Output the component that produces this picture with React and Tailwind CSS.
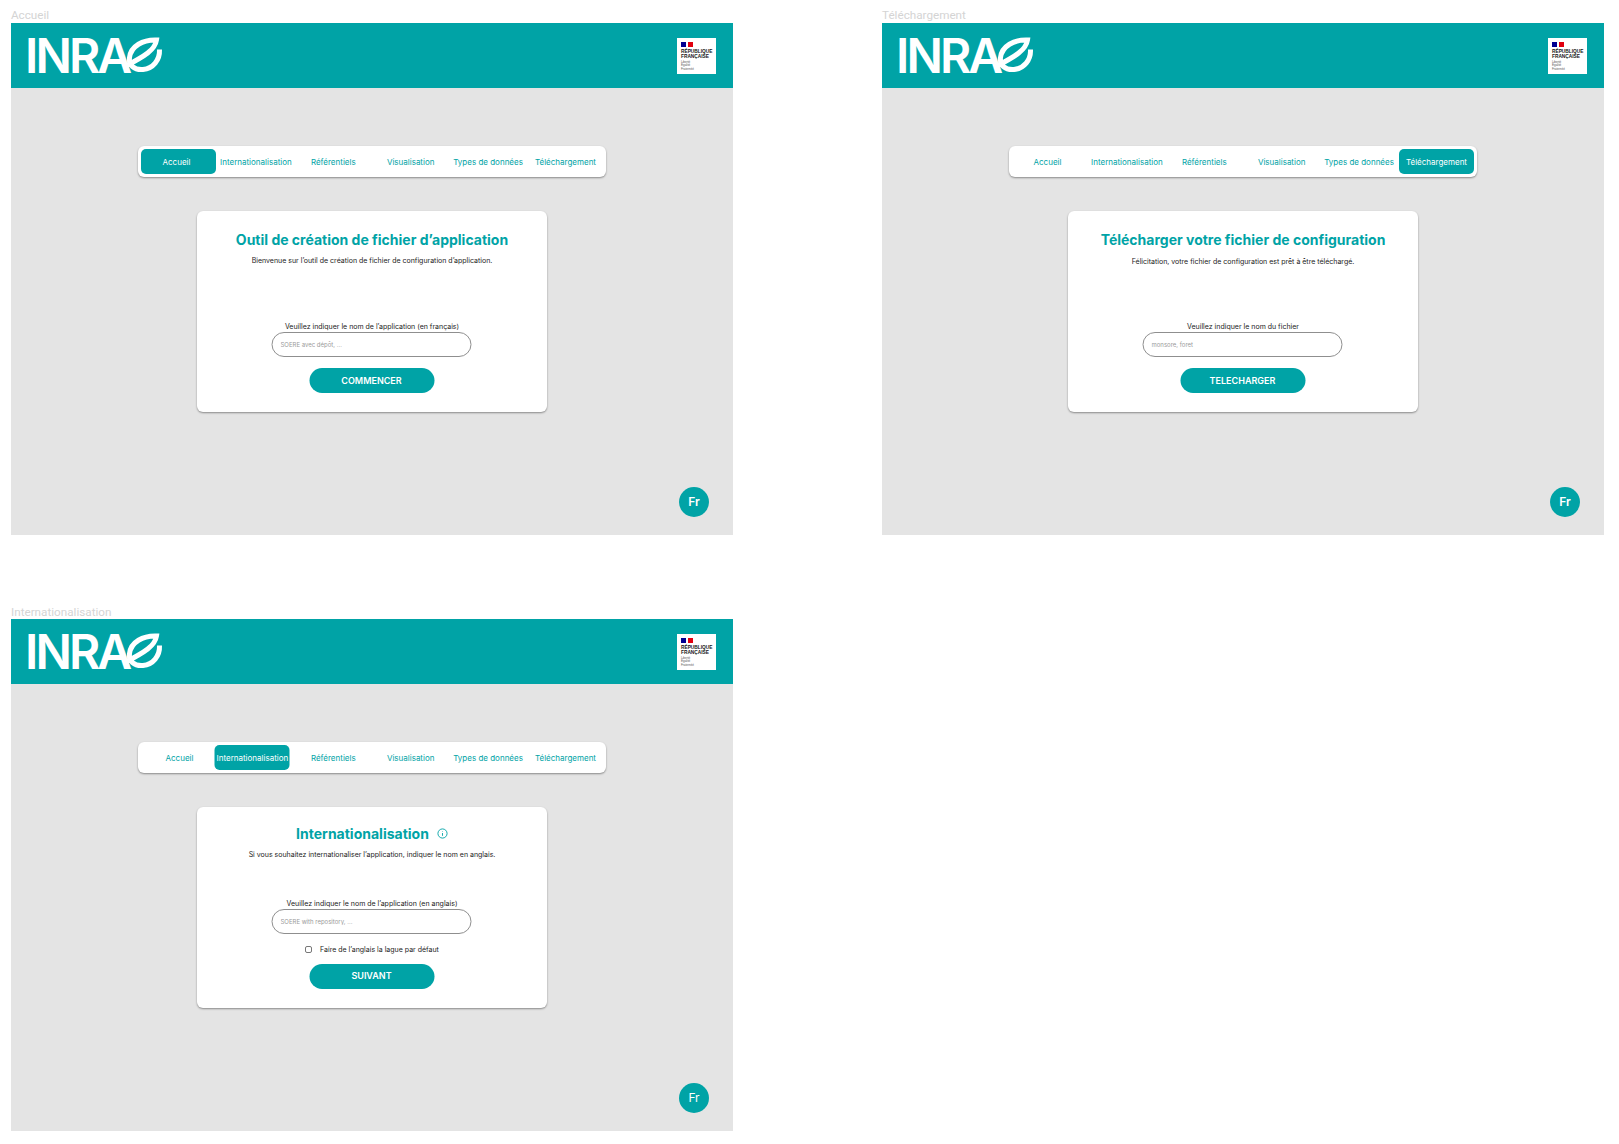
const tabs = ['Accueil', 'Internationalisation', 'Référentiels', 'Visualisation', 'Types de données', 'Téléchargement']

function Logo() {
  return (
    <div className="flex items-center text-white">
      <div className="w-[92px] h-[42px] flex items-center whitespace-nowrap">
        <span className="-ml-[3px] font-['Inter',sans-serif] font-semibold text-[48px] leading-[42px] tracking-[-2.9px]">INRA</span>
      </div>
      {/* the leaf "e" of the logo */}
      <svg width="46" height="42" viewBox="0 0 46 42" fill="none" stroke="white" strokeWidth="5" strokeLinecap="butt" className="-ml-[1px]">
        <path d="M40.5 14.5 C 41 25 34 33.5 24 34.5 C 15 35.2 9.5 30 10.5 22.5 C 12 11 24 4.5 37.5 5 C 36 15 26 21 6 31.5" />
      </svg>
    </div>
  )
}

function RfBlock({ motto }) {
  return (
    <div className="w-[39px] h-[36px] bg-white flex flex-col pl-[4px] pt-[4.5px] font-['Liberation_Sans',sans-serif]">
      <div className="flex gap-[2px] h-[5px]">
        <div className="w-[5px] bg-[#000091]" />
        <div className="w-[5px] bg-[#e1000f]" />
      </div>
      <div className="mt-[1.5px] text-[4.8px] leading-[5.5px] font-bold text-[#161616]">
        RÉPUBLIQUE
        <br />
        FRANÇAISE
      </div>
      <div className="mt-[1px] text-[3px] leading-[3.5px] text-[#555]">
        {motto.map((m) => (
          <div key={m}>{m}</div>
        ))}
      </div>
    </div>
  )
}

function Nav({ active }) {
  return (
    <div className="w-[468px] h-[31px] mx-auto bg-white rounded-[6px] shadow-[0_1px_2px_rgba(0,0,0,0.4)] flex items-center gap-[2.4px] pl-[3px] font-['Inter',sans-serif] text-[8px]">
      {tabs.map((t) => {
        const on = t === active
        return (
          <div
            key={t}
            className={`w-[75px] h-[25px] shrink-0 flex items-center justify-center rounded-[5px] whitespace-nowrap ${
              on ? 'bg-[#00a3a6] text-white' : 'text-[#00a3a6]'
            } ${t === 'Internationalisation' && on ? '-translate-x-[3.5px]' : ''} ${
              t === 'Accueil' ? (active === 'Internationalisation' ? 'pl-[2px]' : 'pr-[4px]') : ''
            }`}
          >
            {t}
          </div>
        )
      })}
    </div>
  )
}

function Card({ title, info, text, label, placeholder, checkbox, button, titleMt, textMt, labelMt, buttonMt }) {
  return (
    <div className="w-[350px] h-[201px] mt-[34px] mx-auto bg-white rounded-[6px] shadow-[0_1px_2px_rgba(0,0,0,0.4)] flex flex-col items-center font-['Inter',sans-serif]">
      <div className={`${titleMt} flex items-center text-[14px] leading-[17px] font-bold text-[#00a3a6]`}>
        {title}
        {info && (
          <svg width="11" height="11" viewBox="0 0 24 24" className="ml-[8px]" fill="none" stroke="#00a3a6" strokeWidth="2">
            <circle cx="12" cy="12" r="10" />
            <path d="M12 11v6M12 7v1" />
          </svg>
        )}
      </div>
      <p className={`${textMt} text-[7px] leading-[11px] text-[#222]`}>{text}</p>
      <div className={`${labelMt} text-[7px] leading-[10px] text-[#222]`}>{label}</div>
      <input
        readOnly
        placeholder={placeholder}
        className="-translate-x-[0.5px] w-[200px] h-[25px] rounded-full border border-[#8f8f8f] pl-[8px] text-[6px] bg-white placeholder:text-[#9a9a9a] outline-none"
      />
      {checkbox && (
        <div className="flex items-center mt-[11px] text-[7px] leading-[9px] text-[#222]">
          <span className="w-[7px] h-[7px] mr-[8px] rounded-[2px] border border-[#777]" />
          {checkbox}
        </div>
      )}
      <button className={`${buttonMt} -translate-x-[0.5px] w-[125px] h-[25px] rounded-full bg-[#00a3a6] text-white text-[9px] font-semibold`}>
        {button}
      </button>
    </div>
  )
}

function Frame({ name, nameClass, active, motto, frBold, ...card }) {
  return (
    <div>
      <div className={`h-[18px] ${nameClass} text-[11.7px] leading-[14px] text-[#d4d4d4] font-['Roboto',sans-serif]`}>{name}</div>
      <div className="relative w-[722px] h-[512px] bg-[#e4e4e4]">
        <header className="h-[65px] bg-[#00a3a6] flex items-center justify-between pl-[17px] pr-[17px]">
          <Logo />
          <RfBlock motto={motto} />
        </header>
        <main className="pt-[58px]">
          <Nav active={active} />
          <Card {...card} />
        </main>
        <div className={`absolute left-[668px] top-[464px] w-[30px] h-[30px] rounded-full bg-[#00a3a6] text-white flex items-center justify-center text-[12px] font-['Inter',sans-serif] ${frBold ? 'font-semibold' : ''}`}>
          Fr
        </div>
      </div>
    </div>
  )
}

export default function App() {
  const motto = ['Liberté', 'Égalité', 'Fraternité']
  return (
    <div className="min-h-[1144px] bg-white pt-[5px] pl-[11px] grid grid-cols-[722px_722px] gap-x-[149px] gap-y-[66px] content-start font-['Inter',sans-serif]">
      <Frame
        name="Accueil"
        nameClass="pt-[2.5px]"
        active="Accueil"
        motto={motto}
        frBold
        title="Outil de création de fichier d’application"
        text="Bienvenue sur l’outil de création de fichier de configuration d’application."
        titleMt="mt-[20px]"
        textMt="mt-[6.5px]"
        labelMt="mt-[56.5px]"
        buttonMt="mt-[11px]"
        label="Veuillez indiquer le nom de l’application (en français)"
        placeholder="SOERE avec dépôt, ..."
        button="COMMENCER"
      />
      <Frame
        name="Téléchargement"
        nameClass="pt-[2.5px]"
        active="Téléchargement"
        motto={motto}
        frBold
        title="Télécharger votre fichier de configuration"
        text="Félicitation, votre fichier de configuration est prêt à être téléchargé."
        titleMt="mt-[20px]"
        textMt="mt-[7.5px]"
        labelMt="mt-[55.5px]"
        buttonMt="mt-[11px]"
        label="Veuillez indiquer le nom du fichier"
        placeholder="monsore, foret"
        button="TELECHARGER"
      />
      <Frame
        name="Internationalisation"
        nameClass="pt-[4px]"
        active="Internationalisation"
        motto={motto}
        title="Internationalisation"
        info
        text="Si vous souhaitez internationaliser l’application, indiquer le nom en anglais."
        titleMt="mt-[18px]"
        textMt="mt-[6.5px]"
        labelMt="mt-[39px]"
        buttonMt="mt-[10px]"
        label="Veuillez indiquer le nom de l’application (en anglais)"
        placeholder="SOERE with repository, ..."
        checkbox="Faire de l’anglais la lague par défaut"
        button="SUIVANT"
      />
    </div>
  )
}
